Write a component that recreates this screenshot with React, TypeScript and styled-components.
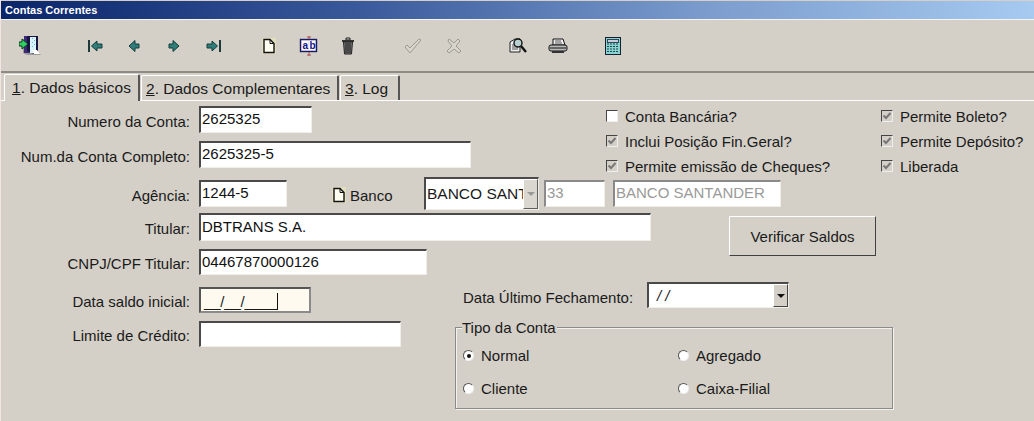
import { createGlobalStyle } from "styled-components";
import styled from "styled-components";
import { ReactNode } from "react";

const GlobalStyle = createGlobalStyle`
	html, body {
		margin: 0;
		padding: 0;
		background: #d4d0c8;
	}
	body {
		font-family: "Liberation Sans", Arial, sans-serif;
		font-size: 15px;
		color: #1a1a1a;
		overflow: hidden;
	}
`;

const ExitIcon = () => (
	<svg width="22" height="22" viewBox="0 0 22 22">
		<path d="M4 4h14v12l4 4H8l-4-2z" fill="#9a9a9a" />
		<path d="M5 1h8v17H5z" fill="#3d2a78" />
		<path d="M8 1h11v17l-4 1-7-3z" fill="#1a1440" />
		<path d="M11 2h6v13l2 3h-8z" fill="#d8f4f8" />
		<path d="M13 3h1v1h-1zM15 5h1v1h-1zM13 7h1v1h-1zM15 9h1v1h-1zM13 11h1v1h-1z" fill="#58b8e0" />
		<path d="M13 15h5l3 4h-6z" fill="#fff" />
		<path d="M0 7h3V4l6 5-6 5v-3H0z" fill="#30d060" stroke="#0a3a20" strokeWidth="1" />
	</svg>
);

const NavIcon = ({ dir, bar }: { dir: "left" | "right"; bar?: boolean }) => (
	<svg width="16" height="12" viewBox="0 0 16 12">
		<g transform={dir === "right" ? "matrix(-1 0 0 1 16 0)" : undefined}>
			{bar && <path d="M1 0h2v12H1z" fill="#1f3a3a" />}
			<path
				d={bar ? "M4.5 6L10 1v3h5v4h-5v3z" : "M3 6l6-5.500v3.500h4v4H9v3.500z"}
				fill="#2f7d78"
				stroke="#123c3c"
				strokeWidth="1"
			/>
		</g>
	</svg>
);

const NewIcon = () => (
	<svg width="14" height="16" viewBox="0 0 14 16">
		<rect x="0" y="0" width="14" height="16" fill="#f4f0b0" opacity="0.45" />
		<path d="M2 1.500h6l4 4v9H2z" fill="#fffef0" stroke="#111" strokeWidth="1.400" />
		<path d="M8 1.500v4h4" fill="none" stroke="#111" />
	</svg>
);

const AbIcon = () => (
	<svg width="20" height="20" viewBox="0 0 20 20">
		<path d="M10 0v20M8 1h4M8 19h4" stroke="#b05050" strokeWidth="1" fill="none" />
		<rect x="1.500" y="3.500" width="16" height="12" fill="#e8e8f8" stroke="#1a1a60" strokeWidth="1.400" />
		<rect x="3" y="5" width="6" height="9" fill="#fff" />
		<rect x="10" y="5" width="6" height="9" fill="#fff" />
		<text x="3.500" y="13" fontSize="10" fontWeight="700" fill="#10108a" fontFamily="Liberation Sans">a</text>
		<text x="10.500" y="13" fontSize="10" fontWeight="700" fill="#10108a" fontFamily="Liberation Sans">b</text>
	</svg>
);

const TrashIcon = () => (
	<svg width="14" height="18" viewBox="0 0 14 18">
		<path d="M5 1h4v2H5z" fill="none" stroke="#222" />
		<path d="M1 3h12v2H1z" fill="#333" />
		<path d="M2.500 5h9l-1 12h-7z" fill="#777" stroke="#222" />
		<path d="M5 6v10M7 6v10M9 6v10" stroke="#1a1a1a" />
	</svg>
);

const CheckIcon = () => (
	<svg width="18" height="16" viewBox="0 0 18 16">
		<path d="M1 9l2-2 3 3 9-9 2 1L6 15z" fill="#d8d5cd" stroke="#9b9990" strokeWidth="1" />
	</svg>
);

const CrossIcon = () => (
	<svg width="16" height="16" viewBox="0 0 16 16">
		<path
			d="M3 1l5 4 4-4 2 2-4 5 5 5-2 2-5-4-5 4-2-2 5-5-4-5z"
			fill="#d8d5cd"
			stroke="#9b9990"
			strokeWidth="1"
		/>
	</svg>
);

const FindIcon = () => (
	<svg width="18" height="18" viewBox="0 0 18 18">
		<path d="M1 5l5-3h5v13H1z" fill="#eee" stroke="#222" />
		<path d="M3 8h6M3 10h6M3 12h6" stroke="#555" />
		<circle cx="9" cy="6" r="4" fill="#b8d0d0" stroke="#111" strokeWidth="1.400" />
		<path d="M12 9l5 6" stroke="#111" strokeWidth="2.400" />
	</svg>
);

const PrintIcon = () => (
	<svg width="20" height="16" viewBox="0 0 20 16">
		<path d="M5 1h10l2 6H5z" fill="#f2f2f2" stroke="#111" />
		<path d="M7 3h6M7 5h7" stroke="#555" />
		<rect x="1" y="7" width="18" height="6" rx="2" fill="#bbb" stroke="#111" />
		<path d="M2 10h16" stroke="#111" />
		<path d="M4 13h12v2H4z" fill="#333" />
	</svg>
);

const CalcIcon = () => (
	<svg width="16" height="18" viewBox="0 0 16 18">
		<rect x="0.500" y="0.500" width="15" height="17" fill="#88d4d0" stroke="#123" />
		<rect x="2.500" y="2.500" width="11" height="3" fill="#ccd" stroke="#345" />
		<path d="M2 7h12M2 9.500h12M2 12h12M2 14.500h12" stroke="#245" strokeDasharray="2 1" />
	</svg>
);

const Tool = ({ gap, children }: { gap?: number; children: ReactNode }) => (
	<ToolButton $gap={gap ?? 0}>{children}</ToolButton>
);

const Check = ({ label, checked }: { label: string; checked?: boolean }) => (
	<CheckRow>
		<CheckBox $disabled={checked}>
			{checked && (
				<svg width="10" height="10" viewBox="0 0 10 10">
					<path d="M1.500 4.500l2.500 2.500 4.500-5" fill="none" stroke="#777" strokeWidth="2" />
				</svg>
			)}
		</CheckBox>
		{label}
	</CheckRow>
);

const Radio = ({ label, on }: { label: string; on?: boolean }) => (
	<RadioRow>
		<RadioDot $on={on} />
		{label}
	</RadioRow>
);

function App() {
	return (
		<>
			<GlobalStyle />
			<Window>
				<TitleBar>Contas Correntes</TitleBar>
				<Toolbar>
					<Tool><ExitIcon /></Tool>
					<Tool gap={26}><NavIcon dir="left" bar /></Tool>
					<Tool><NavIcon dir="left" /></Tool>
					<Tool gap={1}><NavIcon dir="right" /></Tool>
					<Tool gap={1}><NavIcon dir="right" bar /></Tool>
					<Tool gap={16}><NewIcon /></Tool>
					<Tool gap={1}><AbIcon /></Tool>
					<Tool><TrashIcon /></Tool>
					<Tool gap={26}><CheckIcon /></Tool>
					<Tool gap={2}><CrossIcon /></Tool>
					<Tool gap={25}><FindIcon /></Tool>
					<Tool gap={1}><PrintIcon /></Tool>
					<Tool gap={16}><CalcIcon /></Tool>
				</Toolbar>
				<TabStrip>
					<Tab $active $width={136}><u>1</u>. Dados básicos</Tab>
					<Tab $width={198}><u>2</u>. Dados Complementares</Tab>
					<Tab $width={60}><u>3</u>. Log</Tab>
				</TabStrip>
				<FormBody>
					<TopBlock>
						<FieldColumn>
							<Row $height={27}>
								<Label>Numero da Conta:</Label>
								<Input $width={113} $height={27} value="2625325" readOnly />
							</Row>
							<Row $height={27}>
								<Label>Num.da Conta Completo:</Label>
								<Input $width={272} $height={27} value="2625325-5" readOnly />
							</Row>
						</FieldColumn>
						<CheckColumn $width={275}>
							<Check label="Conta Bancária?" />
							<Check label="Inclui Posição Fin.Geral?" checked />
							<Check label="Permite emissão de Cheques?" checked />
						</CheckColumn>
						<CheckColumn>
							<Check label="Permite Boleto?" checked />
							<Check label="Permite Depósito?" checked />
							<Check label="Liberada" checked />
						</CheckColumn>
					</TopBlock>
					<BankRow>
						<Label>Agência:</Label>
						<Input $width={88} $height={27} value="1244-5" readOnly />
						<BankLink>
							<NewIcon />
							<span>Banco</span>
						</BankLink>
						<Combo $width={115} $height={33}>
							<ComboText>BANCO SANT</ComboText>
							<ComboButton $disabled>
								<Arrow $disabled />
							</ComboButton>
						</Combo>
						<Input $width={61} $height={27} $disabled $gap={5} value="33" readOnly />
						<Input $width={168} $height={27} $disabled $gap={8} value="BANCO SANTANDER" readOnly />
					</BankRow>
					<MiddleBlock>
						<MiddleFields>
							<Row $height={28}>
								<Label>Titular:</Label>
								<Input $width={452} $height={28} value="DBTRANS S.A." readOnly />
							</Row>
							<Row $height={26}>
								<Label>CNPJ/CPF Titular:</Label>
								<Input $width={228} $height={26} value="04467870000126" readOnly />
							</Row>
						</MiddleFields>
						<ActionButton>Verificar Saldos</ActionButton>
					</MiddleBlock>
					<BottomBlock>
						<BottomLeft>
							<Row $height={26}>
								<Label>Data saldo inicial:</Label>
								<MaskInput $width={112}>
									<span>__/__/____</span>
									<Caret />
								</MaskInput>
							</Row>
							<Row $height={26}>
								<Label>Limite de Crédito:</Label>
								<Input $width={202} $height={26} value="" readOnly />
							</Row>
						</BottomLeft>
						<BottomRight>
							<DateRow>
								<DateLabel>Data Último Fechamento:</DateLabel>
								<Combo $width={142} $height={26}>
									<DateValue>/ /</DateValue>
									<ComboButton>
										<Arrow />
									</ComboButton>
								</Combo>
							</DateRow>
							<GroupBox>
								<GroupTitle>Tipo da Conta</GroupTitle>
								<Radio label="Normal" on />
								<Radio label="Agregado" />
								<Radio label="Cliente" />
								<Radio label="Caixa-Filial" />
							</GroupBox>
						</BottomRight>
					</BottomBlock>
				</FormBody>
			</Window>
		</>
	);
}

const Window = styled.div`
	width: 1034px;
	height: 421px;
	display: flex;
	flex-direction: column;
	background: #d4d0c8;
	border-left: 1px solid #f2e4e0;
	box-sizing: border-box;
	overflow: hidden;
`;

const TitleBar = styled.div`
	height: 18px;
	margin: 1px 0 0 -1px;
	padding-left: 5px;
	line-height: 18px;
	font-size: 11px;
	font-weight: 700;
	color: #fff;
	background: linear-gradient(90deg, #0a246a 0%, #3a5a9c 35%, #7e9fcf 70%, #a6caf0 100%);
	border-bottom: 1px solid #f4f4f4;
`;

const Toolbar = styled.div`
	height: 51px;
	display: flex;
	align-items: center;
	padding-left: 9px;
	border-bottom: 2px solid #8e8b84;
	box-sizing: content-box;
`;

const ToolButton = styled.div<{ $gap: number }>`
	width: 39px;
	height: 24px;
	margin-left: ${({ $gap }) => $gap}px;
	flex: none;
	display: flex;
	align-items: center;
	justify-content: center;
`;

const TabStrip = styled.div`
	height: 27px;
	display: flex;
	align-items: flex-end;
	padding-left: 3px;
	gap: 1px;
	border-bottom: 1px solid #fff;
`;

const Tab = styled.div<{ $active?: boolean; $width: number }>`
	width: ${({ $width }) => $width}px;
	height: ${({ $active }) => ($active ? 27 : 25)}px;
	margin-bottom: ${({ $active }) => ($active ? -1 : 0)}px;
	box-sizing: border-box;
	padding: ${({ $active }) => ($active ? "4px 0 0 7px" : "4px 0 0 4px")};
	font-size: 15.500px;
	line-height: 18px;
	white-space: nowrap;
	background: #d4d0c8;
	border-top: 1px solid #fff;
	border-left: 1px solid #fff;
	border-right: 2px solid #555;
	border-radius: 2px 2px 0 0;
`;

const FormBody = styled.div`
	flex: 1;
	display: flex;
	flex-direction: column;
	padding-top: 5px;
`;

const TopBlock = styled.div`
	height: 72px;
	display: flex;
	flex: none;
`;

const FieldColumn = styled.div`
	width: 605px;
	display: flex;
	flex-direction: column;
	gap: 8px;
`;

const CheckColumn = styled.div<{ $width?: number }>`
	width: ${({ $width }) => ($width ? `${$width}px` : "auto")};
	display: flex;
	flex-direction: column;
	gap: 5px;
	padding-top: -1px;
`;

const CheckRow = styled.div`
	height: 20px;
	display: flex;
	align-items: center;
	gap: 7px;
	white-space: nowrap;
`;

const CheckBox = styled.div<{ $disabled?: boolean }>`
	width: 12px;
	height: 12px;
	flex: none;
	box-sizing: border-box;
	display: flex;
	align-items: center;
	justify-content: center;
	background: ${({ $disabled }) => ($disabled ? "#d4d0c8" : "#fff")};
	border: 1px solid;
	border-color: #444 #eee #eee #444;
`;

const Row = styled.div<{ $height: number }>`
	height: ${({ $height }) => $height}px;
	display: flex;
	align-items: center;
`;

const Label = styled.label`
	width: 189px;
	margin-right: 9px;
	padding-top: 3px;
	flex: none;
	text-align: right;
	white-space: nowrap;
`;

const sunken = `
	box-sizing: border-box;
	background: #fff;
	border-style: solid;
	border-width: 2px 1px 1px 2px;
	border-color: #4a4a4a #f0eee8 #f0eee8 #4a4a4a;
`;

const Input = styled.input<{ $width: number; $height: number; $disabled?: boolean; $gap?: number }>`
	${sunken}
	width: ${({ $width }) => $width}px;
	height: ${({ $height }) => $height}px;
	margin-left: ${({ $gap }) => $gap ?? 0}px;
	padding: 0 0 3px 1px;
	flex: none;
	outline: none;
	border-radius: 0;
	font-family: "Liberation Sans", Arial, sans-serif;
	font-size: 15px;
	color: ${({ $disabled }) => ($disabled ? "#9a9a9a" : "#111")};
	border-color: ${({ $disabled }) =>
		$disabled ? "#8a8a8a #f0eee8 #f0eee8 #8a8a8a" : "#4a4a4a #f0eee8 #f0eee8 #4a4a4a"};
`;

const BankRow = styled.div`
	height: 33px;
	margin-top: -1px;
	display: flex;
	align-items: center;
	flex: none;
`;

const BankLink = styled.div`
	width: 92px;
	margin-left: 45px;
	padding-top: 3px;
	flex: none;
	display: flex;
	align-items: center;
	gap: 4px;
`;

const Combo = styled.div<{ $width: number; $height: number }>`
	${sunken}
	width: ${({ $width }) => $width}px;
	height: ${({ $height }) => $height}px;
	flex: none;
	display: flex;
	align-items: stretch;
	justify-content: space-between;
`;

const ComboText = styled.div`
	width: 96px;
	padding: 4px 0 0 1px;
	overflow: hidden;
	white-space: nowrap;
	font-size: 15.500px;
	line-height: 22px;
`;

const ComboButton = styled.div<{ $disabled?: boolean }>`
	width: 15px;
	flex: none;
	box-sizing: border-box;
	display: flex;
	align-items: center;
	justify-content: center;
	background: #d4d0c8;
	border: 1px solid;
	border-color: #fff #444 #444 #fff;
	opacity: ${({ $disabled }) => ($disabled ? 0.85 : 1)};
`;

const Arrow = styled.span<{ $disabled?: boolean }>`
	width: 0;
	height: 0;
	border-style: solid;
	border-width: 4px 4px 0;
	border-color: ${({ $disabled }) => ($disabled ? "#888" : "#111")} transparent transparent;
`;

const MiddleBlock = styled.div`
	margin-top: 3px;
	display: flex;
	flex: none;
`;

const MiddleFields = styled.div`
	width: 728px;
	display: flex;
	flex-direction: column;
	gap: 8px;
`;

const ActionButton = styled.button`
	width: 147px;
	height: 40px;
	margin-top: 3px;
	padding: 0;
	box-sizing: border-box;
	background: #d4d0c8;
	border: 1px solid;
	border-color: #fff #404040 #404040 #fff;
	font-family: "Liberation Sans", Arial, sans-serif;
	font-size: 15px;
	color: #1a1a1a;
`;

const BottomBlock = styled.div`
	margin-top: 7px;
	display: flex;
	flex: none;
`;

const BottomLeft = styled.div`
	width: 454px;
	padding-top: 5px;
	display: flex;
	flex-direction: column;
	gap: 8px;
`;

const MaskInput = styled.div<{ $width: number }>`
	${sunken}
	width: ${({ $width }) => $width}px;
	height: 26px;
	padding: 2px 0 0 3px;
	display: flex;
	align-items: center;
	background: #fffaf0;
	border-width: 2px;
	border-color: #555 #8a8a8a #8a8a8a #555;
	font-size: 15px;
	letter-spacing: -0.200px;
`;

const Caret = styled.span`
	width: 1px;
	height: 17px;
	background: #111;
`;

const BottomRight = styled.div`
	width: 438px;
	display: flex;
	flex-direction: column;
`;

const DateRow = styled.div`
	height: 26px;
	padding-left: 8px;
	display: flex;
	align-items: center;
`;

const DateLabel = styled.span`
	width: 184px;
	padding-top: 5px;
	flex: none;
	white-space: nowrap;
`;

const DateValue = styled.span`
	padding: 3px 0 0 8px;
	font-style: italic;
	line-height: 18px;
`;

const GroupBox = styled.div`
	position: relative;
	height: 82px;
	margin-top: 19px;
	box-sizing: border-box;
	padding: 11px 0 0 7px;
	display: grid;
	grid-template-columns: 215px 1fr;
	grid-auto-rows: 33px;
	border: 1px solid #8a8a8a;
	box-shadow: 1px 1px 0 #f4f2ec, inset 1px 1px 0 #f4f2ec;
`;

const GroupTitle = styled.span`
	position: absolute;
	top: -9px;
	left: 6px;
	padding-right: 1px;
	background: #d4d0c8;
	line-height: 17px;
`;

const RadioRow = styled.div`
	height: 33px;
	display: flex;
	align-items: center;
	gap: 7px;
`;

const RadioDot = styled.span<{ $on?: boolean }>`
	width: 11px;
	height: 11px;
	flex: none;
	box-sizing: border-box;
	display: flex;
	align-items: center;
	justify-content: center;
	border-radius: 50%;
	background: #fff;
	border: 1px solid;
	border-color: #555 #eee #eee #555;

	&::after {
		content: "";
		width: 4px;
		height: 4px;
		border-radius: 50%;
		background: ${({ $on }) => ($on ? "#111" : "transparent")};
	}
`;

export default App;
